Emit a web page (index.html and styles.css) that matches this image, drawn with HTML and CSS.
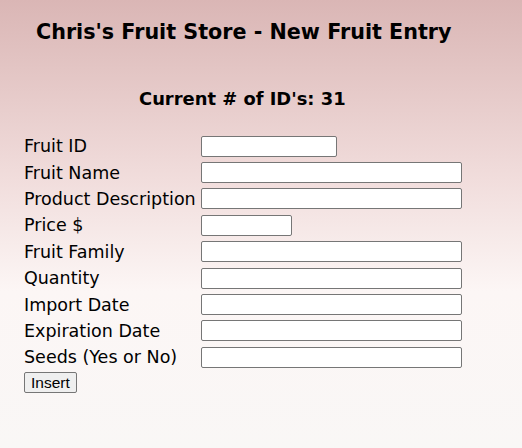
FILE: index.html
```html
<!DOCTYPE html>
<html>
<head>
<meta charset="utf-8">
<link rel="stylesheet" href="styles.css">
</head>
<body>
<div class="page">
  <h1 class="title">Chris's Fruit Store - New Fruit Entry</h1>
  <h2 class="count">Current # of ID's: 31</h2>
  <form class="entry">
    <label class="lbl" for="fid">Fruit ID</label>
    <input class="field short" id="fid" type="text">
    <label class="lbl" for="fname">Fruit Name</label>
    <input class="field" id="fname" type="text">
    <label class="lbl" for="fdesc">Product Description</label>
    <input class="field" id="fdesc" type="text">
    <label class="lbl" for="fprice">Price $</label>
    <input class="field tiny" id="fprice" type="text">
    <label class="lbl" for="ffam">Fruit Family</label>
    <input class="field" id="ffam" type="text">
    <label class="lbl" for="fqty">Quantity</label>
    <input class="field" id="fqty" type="text">
    <label class="lbl" for="fimp">Import Date</label>
    <input class="field" id="fimp" type="text">
    <label class="lbl" for="fexp">Expiration Date</label>
    <input class="field" id="fexp" type="text">
    <label class="lbl" for="fseed">Seeds (Yes or No)</label>
    <input class="field" id="fseed" type="text">
  </form>
  <button class="insert" type="button">Insert</button>
</div>
</body>
</html>
```

FILE: styles.css
```css
html {
  min-height: 100%;
  background: linear-gradient(to bottom, #dab6b5 0%, #f1dddc 40%, #fcf6f5 65%, #f9f7f6 100%);
}
body {
  margin: 0;
  font-family: "DejaVu Sans", Verdana, sans-serif;
  color: #000;
}
.page {
  padding: 20px 0 0 24px;
}
.title {
  font-size: 20.7px;
  font-weight: bold;
  margin: 0 0 0 12px;
  line-height: 24px;
}
.count {
  font-size: 17.9px;
  font-weight: bold;
  margin: 45px 0 0 115px;
  line-height: 20px;
}
.entry {
  display: grid;
  grid-template-columns: 177px auto;
  grid-auto-rows: 26.4px;
  align-items: center;
  justify-items: start;
  margin-top: 24px;
}
.lbl {
  font-size: 17.5px;
  line-height: 20px;
}
.field {
  box-sizing: border-box;
  width: 261px;
  height: 21px;
  margin: 0;
  border: 1px solid #767676;
  border-radius: 2px;
  background: #fff;
  padding: 1px 2px;
}
.short { width: 136px; }
.tiny { width: 91px; }
.insert {
  margin-top: 1px;
  font-family: "Liberation Sans", Arial, sans-serif;
  font-size: 15.5px;
  line-height: 17px;
  padding: 1px 6px;
  border: 1px solid #767676;
  border-radius: 2px;
  background: #efefef;
  color: #000;
}
```
